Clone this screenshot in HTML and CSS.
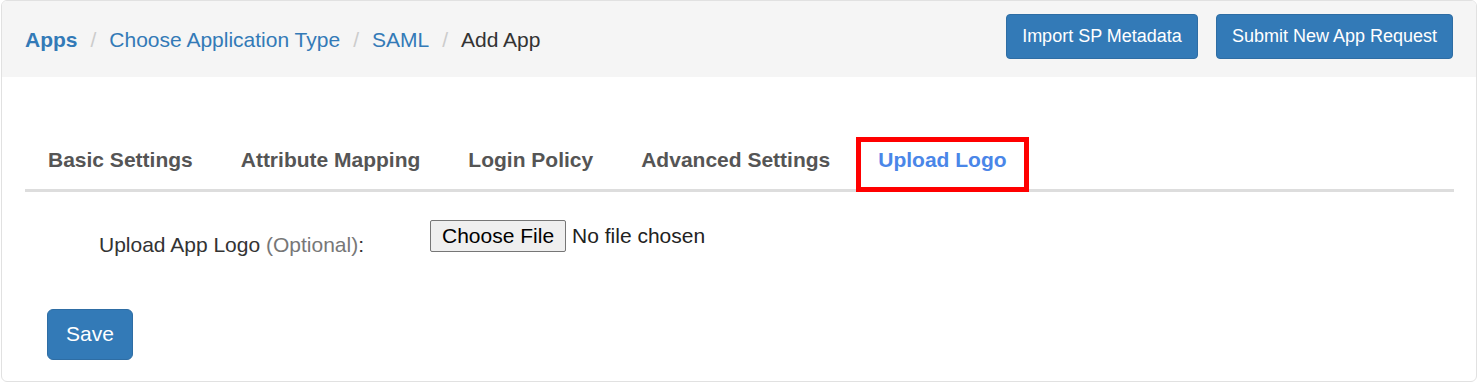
FILE: index.html
```html
<!DOCTYPE html>
<html lang="en">
<head>
    <meta charset="UTF-8">
    <meta name="viewport" content="width=device-width, initial-scale=1.0">
    <title>Add App</title>
    <link rel="stylesheet" href="styles.css">
</head>

<body>
    <div class="panel">
        <div class="header">
            <ul class="breadcrumb">
                <li><a href="#" class="strong">Apps</a></li>
                <li><a href="#">Choose Application Type</a></li>
                <li><a href="#">SAML</a></li>
                <li class="active">Add App</li>
            </ul>
            <div class="actions">
                <button type="button" class="btn btn-sm">Import SP Metadata</button>
                <button type="button" class="btn btn-sm">Submit New App Request</button>
            </div>
        </div>

        <div class="content">
            <ul class="tabs">
                <li><a href="#">Basic Settings</a></li>
                <li><a href="#">Attribute Mapping</a></li>
                <li><a href="#">Login Policy</a></li>
                <li><a href="#">Advanced Settings</a></li>
                <li class="active"><a href="#">Upload Logo</a></li>
            </ul>

            <form class="logo-form">
                <div class="form-row">
                    <label class="control-label" for="app-logo">Upload App Logo <span class="muted">(Optional)</span>:</label>
                    <input id="app-logo" class="file-input" type="file">
                </div>
                <button type="button" class="btn btn-save">Save</button>
            </form>
        </div>
    </div>
</body>

</html>
```

FILE: styles.css
```css
* {
    margin: 0;
    padding: 0;
    list-style: none;
    box-sizing: border-box;
}

body {
    background: #fff;
    font-family: "Liberation Sans", Arial, sans-serif;
    color: #333;
}

a {
    text-decoration: none;
}

.panel {
    margin: 0 1px;
    border: 1px solid #e1e1e1;
    border-radius: 6px;
}

.header {
    display: flex;
    justify-content: space-between;
    align-items: flex-start;
    height: 76px;
    padding: 13px 23px 0 23px;
    background-color: #f5f5f5;
    border-radius: 5px 5px 0 0;
}

.breadcrumb {
    display: flex;
    padding-top: 11px;
    font-size: 21px;
    line-height: 30px;
}

.breadcrumb a {
    color: #337ab7;
}

.breadcrumb .strong {
    font-weight: bold;
}

.breadcrumb li + li::before {
    content: '/';
    padding: 0 13px;
    color: #ccc;
}

.breadcrumb .active {
    color: #333;
}

.actions {
    display: flex;
    gap: 18px;
}

.btn {
    font-family: inherit;
    color: #fff;
    background-color: #337ab7;
    border: 1px solid #2e6da4;
    cursor: pointer;
}

.btn-sm {
    font-size: 18px;
    line-height: 27px;
    padding: 8px 15px;
    border-radius: 4px;
}

.content {
    padding: 60px 22px 21px 23px;
}

.tabs {
    display: flex;
    gap: 4px;
    padding-left: 1px;
    border-bottom: 3px solid #ddd;
}

.tabs li {
    margin-bottom: -3px;
    border-bottom: 3px solid transparent;
}

.tabs a {
    display: block;
    padding: 8px 22px 14px;
    font-size: 21px;
    line-height: 30px;
    font-weight: bold;
    color: #555;
}

.tabs .active {
    border-bottom-color: #4a86e8;
    outline: 5px solid #f00;
    outline-offset: -5px;
}

.tabs .active a {
    color: #4a86e8;
}

.logo-form {
    padding-left: 22px;
}

.form-row {
    display: flex;
    align-items: flex-start;
    margin-top: 28px;
}

.control-label {
    flex: 0 0 383px;
    padding: 10px 0 0 52px;
    font-size: 21px;
    line-height: 30px;
    color: #333;
}

.muted {
    color: #777;
}

.file-input {
    width: 320px;
    font-family: "Liberation Sans", Arial, sans-serif;
    font-size: 21px;
    line-height: 30px;
    color: #222;
}

.file-input::file-selector-button {
    height: 32px;
    margin-right: 6px;
    padding: 0 11px;
    font-family: inherit;
    font-size: 21px;
    color: #000;
    background-color: #efefef;
    border: 1px solid #767676;
    border-radius: 2px;
}

.btn-save {
    margin-top: 49px;
    padding: 9px 18px 10px;
    font-size: 21px;
    line-height: 30px;
    border-radius: 6px;
}
```
